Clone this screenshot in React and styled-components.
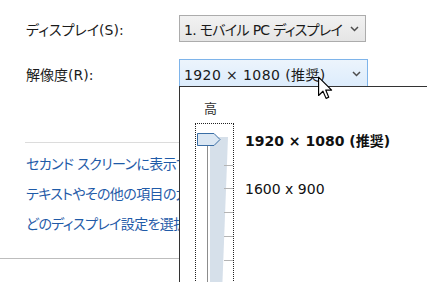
import React from "react";
import styled, { createGlobalStyle } from "styled-components";

const GlobalStyle = createGlobalStyle`
  html, body { margin: 0; padding: 0; background: #fff; }
  body {
    font-family: "DejaVu Sans", "Noto Sans CJK JP", sans-serif;
    font-size: 14px;
    color: #1a1a1a;
    font-feature-settings: "palt";
    overflow: hidden;
  }
`;

const Page = styled.div`
  position: relative;
  width: 427px;
  height: 282px;
  overflow: hidden;
`;

const Form = styled.div`
  display: grid;
  grid-template-columns: 153px auto;
  row-gap: 17px;
  align-items: center;
  padding: 15px 0 0 26px;
`;

const Label = styled.div`
  white-space: nowrap;
`;

const Select = styled.div`
  box-sizing: border-box;
  width: ${(p) => p.$w}px;
  height: ${(p) => p.$h}px;
  display: flex;
  align-items: center;
  justify-content: space-between;
  padding: 0 6px 0 4px;
  border: 1px solid ${(p) => (p.$hover ? "#7eb4ea" : "#acacac")};
  background: ${(p) =>
    p.$hover
      ? "linear-gradient(#ecf4fc, #dcecfc)"
      : "linear-gradient(#f2f2f2, #e5e5e5)"};
  white-space: nowrap;
  overflow: hidden;
`;

const SelectText = styled.span`
  flex: 1;
  min-width: 0;
  overflow: hidden;
  letter-spacing: ${(p) => p.$ls || 0}px;
`;

const ChevronSvg = styled.svg`
  flex-shrink: 0;
  margin-left: 4px;
`;

const Chevron = () => (
  <ChevronSvg width="9" height="6" viewBox="0 0 9 6">
    <polyline points="1,1 4.5,4.5 8,1" fill="none" stroke="#4d4d4d" strokeWidth="1.5" />
  </ChevronSvg>
);

const Spacer = styled.div`
  height: 54px;
`;

const Divider = styled.div`
  height: 1px;
  background: ${(p) => p.$color};
  margin-left: ${(p) => p.$indent}px;
  width: ${(p) => 179 - p.$indent}px;
`;

const Links = styled.div`
  display: flex;
  flex-direction: column;
  padding: 6px 0 19px 26px;
`;

const Link = styled.a`
  display: block;
  height: 30px;
  line-height: 30px;
  color: #1f5ba8;
  text-decoration: none;
  white-space: nowrap;
  letter-spacing: -0.6px;
`;

const Dropdown = styled.div`
  position: absolute;
  left: 179px;
  top: 86px;
  width: 260px;
  height: 210px;
  box-sizing: border-box;
  border: 1px solid #333;
  background: #fff;
  display: flex;
  gap: 11px;
  padding-left: 15px;
`;

const SliderCol = styled.div`
  width: 39px;
  display: flex;
  flex-direction: column;
`;

const HighLabel = styled.div`
  height: 36px;
  line-height: 44px;
  font-size: 13px;
  padding-left: 9px;
  color: #333;
  box-sizing: border-box;
`;

const SliderBox = styled.div`
  flex: 1;
  border: 1px dotted #222;
  border-bottom: none;
`;

const Options = styled.div`
  display: flex;
  flex-direction: column;
  gap: 24px;
  padding-top: 42px;
`;

const Option = styled.div`
  height: 24px;
  line-height: 24px;
  white-space: nowrap;
  font-weight: ${(p) => (p.$bold ? 700 : 400)};
  color: #111;
`;

const Cursor = styled.svg`
  position: absolute;
  left: 318px;
  top: 76px;
`;

const Slider = () => (
  <svg width="37" height="170" viewBox="0 0 37 170" style={{ display: "block" }}>
    <polygon points="14,13 32,13 26,170 14,170" fill="#d6e0ea" />
    <line x1="11.5" y1="21" x2="11.5" y2="170" stroke="#8c8c8c" strokeWidth="1" />
    {[41, 64, 88, 112, 136, 160].map((y) => (
      <line key={y} x1="28" y1={y + 0.5} x2="37" y2={y + 0.5} stroke="#b4b4b4" strokeWidth="1" />
    ))}
    <polygon points="1.5,9.5 18,9.5 24,15.5 18,21.5 1.5,21.5" fill="#dbe7f3" stroke="#3a6ea5" strokeWidth="1" />
  </svg>
);

export default function App() {
  return (
    <Page>
      <GlobalStyle />
      <Form>
        <Label>ディスプレイ(S):</Label>
        <Select $w={187} $h={27}>
          <SelectText $ls={-0.7}>1. モバイル PC ディスプレイ</SelectText>
          <Chevron />
        </Select>
        <Label>解像度(R):</Label>
        <Select $w={189} $h={29} $hover>
          <SelectText $ls={0.4}>1920 × 1080 (推奨)</SelectText>
          <Chevron />
        </Select>
      </Form>
      <Spacer />
      <Divider $color="#dcdcdc" $indent={25} />
      <Links>
        <Link href="#">セカンド スクリーンに表示する項目</Link>
        <Link href="#">テキストやその他の項目の大きさを変更します</Link>
        <Link href="#">どのディスプレイ設定を選択すればよいですか?</Link>
      </Links>
      <Divider $color="#bdbdbd" $indent={0} />
      <Dropdown>
        <SliderCol>
          <HighLabel>高</HighLabel>
          <SliderBox>
            <Slider />
          </SliderBox>
        </SliderCol>
        <Options>
          <Option $bold>1920 × 1080 (推奨)</Option>
          <Option>1600 x 900</Option>
        </Options>
      </Dropdown>
      <Cursor width="15" height="24" viewBox="0 0 13 20">
        <path d="M0.5,0.5 L0.5,16.5 L4.3,12.8 L7,19 L9.3,18 L6.7,11.8 L11.8,11.8 Z" fill="#fff" stroke="#000" strokeWidth="1" strokeLinejoin="round" />
      </Cursor>
    </Page>
  );
}
